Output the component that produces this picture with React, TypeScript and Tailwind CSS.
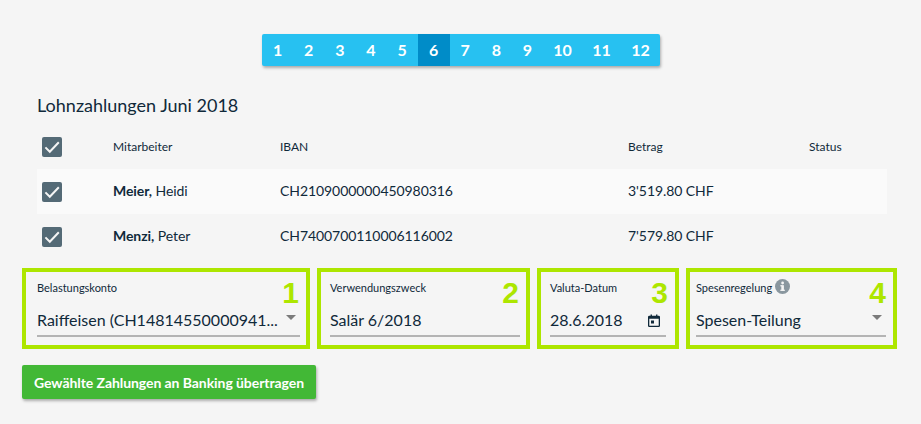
import type { ReactNode } from "react";

const COLS = "grid grid-cols-[76px_167px_348px_181px_1fr] items-center h-[45px]";

function Check() {
  return (
    <div className="w-5 h-5 ml-[5px] rounded-[2px] bg-[#546a76] flex items-center justify-center">
      <svg width="20" height="20" viewBox="0 0 20 20" fill="none">
        <path d="M3.4 10.4 7.8 14.8 16.8 5.2" stroke="#f5f5f5" strokeWidth="2" />
      </svg>
    </div>
  );
}

function Row({ last, first, iban, amount, shaded }: { last: string; first: string; iban: string; amount: string; shaded?: boolean }) {
  return (
    <div className={`${COLS} text-[14px] tracking-[-0.07px] ${shaded ? "bg-[#fafafa]" : ""}`}>
      <Check />
      <div className="-mt-[2px]"><span className="font-bold">{last},</span> {first}</div>
      <div className="-mt-[2px]">{iban}</div>
      <div className="-mt-[2px]">{amount}</div>
      <div />
    </div>
  );
}

function Box({ className, n, label, children, info }: { className: string; n: string; label: string; children: ReactNode; info?: boolean }) {
  return (
    <div className={`${className} h-[81px] border-4 border-[#ade600] relative pt-[8px] shrink-0`}>
      <div className="text-[11px] leading-[15px] flex items-center gap-[3px] h-[15px]">
        {label}
        {info && (
          <svg width="15" height="15" viewBox="0 0 15 15" className="-mt-[3px]">
            <circle cx="7.5" cy="7.5" r="7.5" fill="#8a979f" />
            <rect x="6.3" y="6.2" width="2.6" height="5.6" fill="#f5f5f5" />
            <rect x="5.3" y="6.2" width="2" height="1.2" fill="#f5f5f5" />
            <rect x="5.3" y="10.7" width="4.6" height="1.2" fill="#f5f5f5" />
            <circle cx="7.6" cy="4" r="1.4" fill="#f5f5f5" />
          </svg>
        )}
      </div>
      <div className="absolute right-[7px] top-[3px] text-[#ade600] text-[30px] leading-[36px] font-bold font-['Liberation_Sans',sans-serif]">{n}</div>
      <div className="mt-[10px] h-[32px] border-b-[2px] border-[#b4b4b4] flex items-center justify-between text-[16px] whitespace-nowrap">
        {children}
      </div>
    </div>
  );
}

function Caret() {
  return <div className="w-0 h-0 border-x-[5px] border-x-transparent border-t-[5px] border-t-[#7b7b7b] mr-[4px] -mt-[5px]" />;
}

export default function App() {
  const pages = [1, 2, 3, 4, 5, 6, 7, 8, 9, 10, 11, 12];
  return (
    <div className="w-[921px] h-[424px] overflow-hidden bg-[#f5f5f5] text-[#10293a] font-['Lato',sans-serif] pt-[34px] pl-[22px]">
      <div className="flex ml-[240px] w-[398px] h-[32px] rounded-[2px] bg-[#27c1f1] shadow-[1px_2px_3px_rgba(0,0,0,0.3)] overflow-hidden text-white text-[16px] font-bold">
        {pages.map((p) => (
          <div
            key={p}
            className={`flex items-center justify-center ${p === 6 ? "bg-[#008cc8] w-[32px]" : p >= 10 ? "w-[39px]" : "w-[31.2px]"}`}
          >
            {p}
          </div>
        ))}
      </div>

      <h1 className="ml-[15px] mt-[28px] text-[18px] leading-[22px] font-normal">Lohnzahlungen Juni 2018</h1>

      <div className="ml-[15px] w-[850px] mt-[8px]">
        <div className={`${COLS} text-[12px]`}>
          <Check />
          <div>Mitarbeiter</div>
          <div>IBAN</div>
          <div>Betrag</div>
          <div>Status</div>
        </div>
        <Row shaded last="Meier" first="Heidi" iban="CH2109000000450980316" amount="3'519.80 CHF" />
        <Row last="Menzi" first="Peter" iban="CH7400700110006116002" amount="7'579.80 CHF" />
      </div>

      <div className="flex gap-[7px] mt-[9px]">
        <Box className="w-[288px] pl-[11px] pr-[6px]" n="1" label="Belastungskonto">
          <span>Raiffeisen (CH14814550000941...</span>
          <Caret />
        </Box>
        <Box className="w-[213px] pl-[9px] pr-[6px]" n="2" label="Verwendungszweck">
          <span>Salär 6/2018</span>
        </Box>
        <Box className="w-[142px] pl-[9px] pr-[9px]" n="3" label="Valuta-Datum">
          <span>28.6.2018</span>
          <svg width="12" height="13" viewBox="0 0 14 15" className="mr-[6px]">
            <path fillRule="evenodd" fill="#10293a" d="M1.5 2H3V.5h1.6V2h4.8V.5H11V2h1.5A1.5 1.5 0 0 1 14 3.5v10a1.5 1.5 0 0 1-1.5 1.5h-11A1.5 1.5 0 0 1 0 13.5v-10A1.5 1.5 0 0 1 1.5 2ZM1.5 5.5v8h11v-8ZM3.5 7.5h3.5V11H3.5Z" />
          </svg>
        </Box>
        <Box className="w-[211px] pl-[6px] pr-[7px]" n="4" label="Spesenregelung" info>
          <span>Spesen-Teilung</span>
          <Caret />
        </Box>
      </div>

      <button className="block mt-[16px] w-[294px] h-[34px] rounded-[2px] bg-[#42b836] text-white text-[14px] tracking-[-0.07px] font-bold shadow-[1px_2px_3px_rgba(0,0,0,0.3)]">
        Gewählte Zahlungen an Banking übertragen
      </button>
    </div>
  );
}
